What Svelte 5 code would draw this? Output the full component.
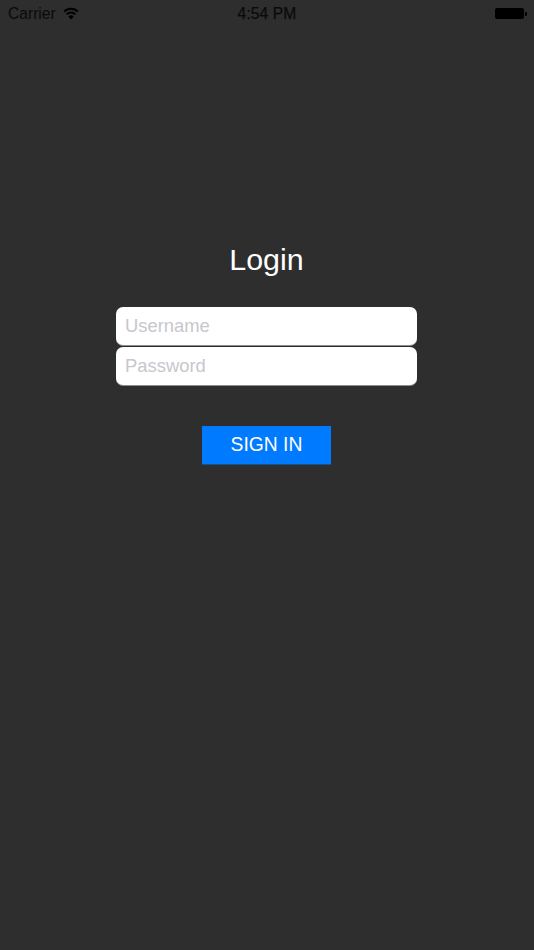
<script lang="ts">
  let username = $state('');
  let password = $state('');
</script>

<div class="screen">
  <header class="status">
    <div class="left">
      <span>Carrier</span>
      <svg class="wifi" width="16" height="13" viewBox="0 0 16 13">
        <path d="M8 12.6 5.3 9.5a3.8 3.8 0 0 1 5.4 0Z" fill="#000" />
        <path d="M3.6 7.4a6.2 6.2 0 0 1 8.8 0" fill="none" stroke="#000" stroke-width="1.9" />
        <path d="M1.1 4.6a9.8 9.8 0 0 1 13.8 0" fill="none" stroke="#000" stroke-width="1.9" />
      </svg>
    </div>
    <div class="time">4:54 PM</div>
    <div class="right">
      <div class="battery"></div>
      <div class="nub"></div>
    </div>
  </header>

  <main class="form">
    <h1>Login</h1>
    <div class="fields">
      <input type="text" placeholder="Username" bind:value={username} />
      <input type="password" placeholder="Password" bind:value={password} />
    </div>
    <button type="button">SIGN IN</button>
  </main>
</div>

<style>
  :global(body) {
    margin: 0;
    background: #2e2e2e;
  }
  .screen {
    height: 950px;
    background: #2e2e2e;
    font-family: "Liberation Sans", Arial, sans-serif;
    overflow: hidden;
  }
  .status {
    display: grid;
    grid-template-columns: 1fr auto 1fr;
    align-items: center;
    height: 27px;
    padding: 0 7px 0 7px;
    color: #0a0a0a;
    font-size: 15.6px;
  }
  .left {
    display: flex;
    align-items: center;
    gap: 7px;
    padding-left: 1px;
  }
  .wifi {
    margin-top: -1px;
  }
  .time {
    font-size: 15.6px;
    letter-spacing: 0.1px;
    -webkit-text-stroke: 0.25px #0a0a0a;
  }
  .right {
    display: flex;
    justify-content: flex-end;
    align-items: center;
  }
  .battery {
    width: 29px;
    height: 11px;
    background: #000;
    border-radius: 2px;
  }
  .nub {
    width: 2px;
    height: 4px;
    margin-left: 1px;
    background: #000;
    border-radius: 0 1px 1px 0;
  }
  .form {
    display: flex;
    flex-direction: column;
    align-items: center;
    padding: 215px 1px 0 0;
  }
  h1 {
    margin: 0;
    height: 37px;
    font-size: 30.4px;
    line-height: 34px;
    font-weight: 400;
    color: #fff;
  }
  .fields {
    display: flex;
    flex-direction: column;
    gap: 2px;
    margin-top: 28px;
  }
  input {
    box-sizing: border-box;
    width: 301px;
    height: 38px;
    padding: 0 9px;
    border: 0;
    border-radius: 7px;
    outline: 0;
    background: #fff;
    box-shadow: 0 1px 0 rgba(255, 255, 255, 0.45);
    color: #222;
    font-family: inherit;
    font-size: 18.4px;
  }
  input::placeholder {
    color: #c7c7cd;
    opacity: 1;
  }
  button {
    width: 129px;
    height: 38px;
    margin-top: 41px;
    padding: 0;
    border: 0;
    border-radius: 0;
    background: #007aff;
    box-shadow: 0 1px 0 rgba(0, 122, 255, 0.45);
    color: #fff;
    font-family: inherit;
    font-size: 19.3px;
  }
</style>
